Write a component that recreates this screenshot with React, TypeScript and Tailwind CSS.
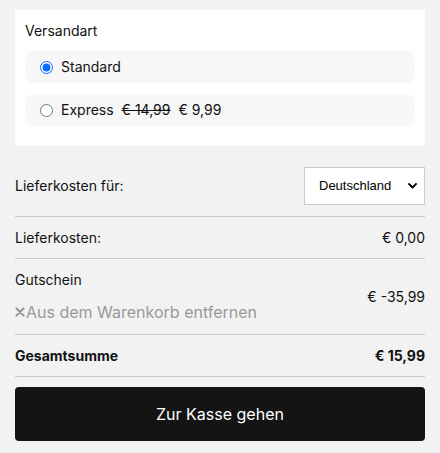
import React, { useState } from 'react';

const Divider = () => <div className="h-px bg-[#cccccc]"></div>;

const App = () => {
  const [method, setMethod] = useState('standard');

  const options = [
    { id: 'standard', label: 'Standard' },
    { id: 'express', label: 'Express', oldPrice: '€ 14,99', price: '€ 9,99' }
  ];

  return (
    <div className="min-h-[453px] bg-[#f2f2f2] px-[15px] pt-[10px] pb-[12px] text-[14px] leading-[20px] text-[#111111] font-['Inter','Liberation_Sans',sans-serif]">
      <div className="bg-white rounded-[2px] px-[10px] pt-[11px] pb-[20px]">
        <div className="mb-[10px]">Versandart</div>
        <div className="flex flex-col gap-[11px]">
          {options.map((opt) => (
            <label
              key={opt.id}
              className="flex items-center h-[32px] rounded-[8px] bg-[#f7f7f7] pl-[15px] cursor-pointer"
            >
              <input
                type="radio"
                name="versand"
                checked={method === opt.id}
                onChange={() => setMethod(opt.id)}
                className="m-0 w-[13px] h-[13px] accent-[#0a6cff]"
              />
              <span className="ml-[8px]">{opt.label}</span>
              {opt.oldPrice && <span className="ml-[8px] line-through">{opt.oldPrice}</span>}
              {opt.price && <span className="ml-[8px]">{opt.price}</span>}
            </label>
          ))}
        </div>
      </div>

      <div className="flex items-center justify-between mt-[21px] mb-[11px]">
        <span>Lieferkosten für:</span>
        <div className="relative">
          <select className="appearance-none w-[121px] h-[38px] bg-white border border-[#cccccc] rounded-none pl-[14px] pr-[20px] text-[13px] text-black font-['Liberation_Sans',Arial,sans-serif]">
            <option>Deutschland</option>
            <option>Österreich</option>
            <option>Schweiz</option>
          </select>
          <svg
            className="absolute right-[8px] top-1/2 -translate-y-1/2 pointer-events-none"
            width="9"
            height="6"
            viewBox="0 0 9 6"
            fill="none"
          >
            <path d="M1 1l3.5 3.5L8 1" stroke="#000" strokeWidth="1.8" strokeLinecap="round" strokeLinejoin="round" />
          </svg>
        </div>
      </div>
      <Divider />

      <div className="flex items-center justify-between pt-[11px] pb-[10px]">
        <span>Lieferkosten:</span>
        <span>€ 0,00</span>
      </div>
      <Divider />

      <div className="flex items-center justify-between pt-[11px] pb-[10px]">
        <div className="flex flex-col gap-[10px]">
          <span>Gutschein</span>
          <button className="flex items-center text-[16px] leading-[24px] text-[#999999] text-left">
            <svg width="10" height="10" viewBox="0 0 10 10" className="mr-[1px]">
              <path d="M1.5 1.5l7 7M8.5 1.5l-7 7" stroke="#999999" strokeWidth="2.2" strokeLinecap="round" />
            </svg>
            Aus dem Warenkorb entfernen
          </button>
        </div>
        <span>€ -35,99</span>
      </div>
      <Divider />

      <div className="flex items-center justify-between pt-[11px] pb-[10px] font-bold">
        <span>Gesamtsumme</span>
        <span>€ 15,99</span>
      </div>
      <Divider />

      <button className="mt-[10px] w-full h-[54px] rounded-[4px] bg-[#141414] text-white text-[16px]">
        Zur Kasse gehen
      </button>
    </div>
  );
};

export default App;
